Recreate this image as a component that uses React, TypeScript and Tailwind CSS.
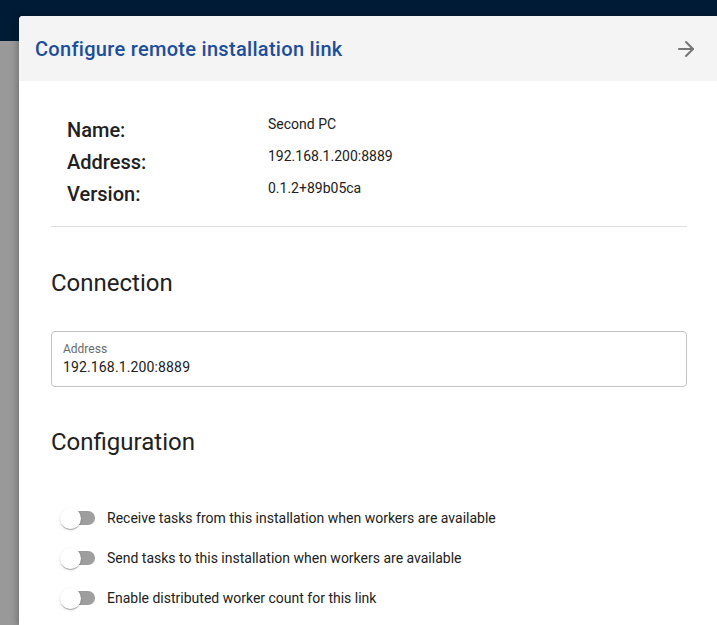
import { ArrowRight } from 'lucide-react';

const info = [
  { label: 'Name:', value: 'Second PC' },
  { label: 'Address:', value: '192.168.1.200:8889' },
  { label: 'Version:', value: '0.1.2+89b05ca' },
];

const toggles = [
  'Receive tasks from this installation when workers are available',
  'Send tasks to this installation when workers are available',
  'Enable distributed worker count for this link',
];

function Toggle({ label }: { label: string }) {
  return (
    <div className="flex items-center h-[40px]">
      <div className="relative w-[56px] h-[40px] shrink-0">
        <div className="absolute left-[12px] top-[13px] w-[32px] h-[14px] rounded-full bg-[#9e9e9e]" />
        <div className="absolute left-[9px] top-[10px] w-[21px] h-[21px] rounded-full bg-white shadow-[0_2px_1px_-1px_rgba(0,0,0,0.2),0_1px_1px_0_rgba(0,0,0,0.14),0_1px_3px_0_rgba(0,0,0,0.12)]" />
      </div>
      <span className="text-[14px] text-[#212121]">{label}</span>
    </div>
  );
}

export default function App() {
  return (
    <div className="relative w-[717px] h-[625px] overflow-hidden bg-[#999999] font-['Roboto',sans-serif]">
      {/* page behind the drawer */}
      <div className="h-[41px] bg-[#001b36]" />
      <div className="absolute left-0 right-0 top-0 h-[16px] bg-[#001b36]" />

      {/* drawer */}
      <div className="absolute left-[19px] top-[16px] right-0 bottom-0 bg-white rounded-tl-[4px] shadow-[-2px_0_6px_rgba(0,0,0,0.25)] flex flex-col">
        <div className="h-[65px] bg-[#f4f4f4] rounded-tl-[4px] flex items-center justify-between pl-[16px] pr-[19px]">
          <h1 className="text-[20px] font-medium text-[#1b4ea1] tracking-[0.015em]">Configure remote installation link</h1>
          <ArrowRight size={24} strokeWidth={2} className="text-[#757575]" />
        </div>

        <div className="pl-[32px] pr-[30px]">
          <table className="mt-[33px] ml-[16px]">
            <tbody>
              {info.map((r) => (
                <tr key={r.label}>
                  <td className="w-[201px] h-[32px] p-0 text-[20px] font-medium leading-[32px] text-[#212121] align-top">{r.label}</td>
                  <td className="p-0 text-[14px] leading-[20px] text-[#212121] align-top">{r.value}</td>
                </tr>
              ))}
            </tbody>
          </table>

          <div className="mt-[16px] border-t border-[#e0e0e0]" />

          <h2 className="mt-[40px] text-[24px] leading-[32px] text-[#212121]">Connection</h2>

          <div className="mt-[32px] h-[56px] border border-[#c4c4c4] rounded-[4px] px-[11px] pt-[9px]">
            <div className="text-[12px] leading-[16px] text-[#6b6b6b]">Address</div>
            <div className="text-[14px] leading-[20px] tracking-[0.01em] text-[#212121]">192.168.1.200:8889</div>
          </div>

          <h2 className="mt-[39px] text-[24px] leading-[32px] text-[#212121]">Configuration</h2>

          <div className="mt-[40px] flex flex-col">
            {toggles.map((t) => (
              <Toggle key={t} label={t} />
            ))}
          </div>
        </div>
      </div>
    </div>
  );
}
